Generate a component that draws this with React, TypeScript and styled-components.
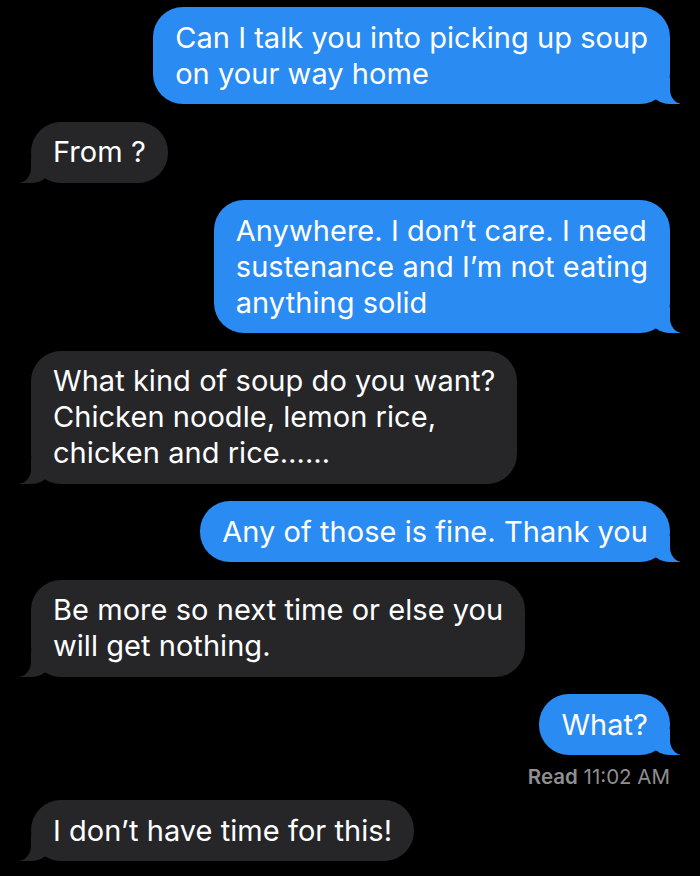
import React from "react";
import styled, { createGlobalStyle, css } from "styled-components";

const GlobalStyle = createGlobalStyle`
  html, body {
    margin: 0;
    padding: 0;
    background: #000;
  }
  body {
    font-family: "Inter", "Roboto", "Liberation Sans", sans-serif;
    -webkit-font-smoothing: antialiased;
  }
`;

const BLUE = "#2a8bf3";
const GRAY = "#262629";

const Thread = styled.div`
  width: 700px;
  min-height: 876px;
  box-sizing: border-box;
  padding: 7px 30px 0 31px;
  display: flex;
  flex-direction: column;
  gap: 17.5px;
  overflow: hidden;
`;

const Bubble = styled.div<{ $sent?: boolean }>`
  position: relative;
  z-index: 0;
  padding: 12.5px 22px;
  border-radius: 30px;
  font-size: 29px;
  line-height: 36px;
  letter-spacing: 0.05px;
  color: #fff;
  white-space: nowrap;
  align-self: ${(p) => (p.$sent ? "flex-end" : "flex-start")};
  background: ${(p) => (p.$sent ? BLUE : GRAY)};

  &::before,
  &::after {
    content: "";
    position: absolute;
    bottom: 0;
    z-index: -1;
  }

  ${(p) =>
    p.$sent
      ? css`
          &::before {
            right: -10px;
            width: 30px;
            height: 26px;
            background: ${BLUE};
            border-bottom-left-radius: 20px 16px;
          }
          &::after {
            right: -16px;
            width: 16px;
            height: 26px;
            background: #000;
            border-bottom-left-radius: 12px 15px;
          }
        `
      : css`
          &::before {
            left: -12px;
            width: 32px;
            height: 26px;
            background: ${GRAY};
            border-bottom-right-radius: 20px 16px;
          }
          &::after {
            left: -18px;
            width: 18px;
            height: 26px;
            background: #000;
            border-bottom-right-radius: 13px 15px;
          }
        `}
`;

const Receipt = styled.div`
  align-self: flex-end;
  margin: -8px 0 -6px;
  font-size: 20.5px;
  line-height: 24px;
  color: #8e8e93;

  b {
    font-weight: 600;
  }
`;

type Msg = { sent?: boolean; lines: string[] };

const messages: Msg[] = [
  { sent: true, lines: ["Can I talk you into picking up soup", "on your way home"] },
  { lines: ["From ?"] },
  {
    sent: true,
    lines: ["Anywhere. I don\u2019t care. I need", "sustenance and I\u2019m not eating", "anything solid"],
  },
  {
    lines: ["What kind of soup do you want?", "Chicken noodle, lemon rice,", "chicken and rice\u2026\u2026"],
  },
  { sent: true, lines: ["Any of those is fine. Thank you"] },
  { lines: ["Be more so next time or else you", "will get nothing."] },
  { sent: true, lines: ["What?"] },
];

export default function App() {
  return (
    <>
      <GlobalStyle />
      <Thread>
        {messages.map((m, i) => (
          <Bubble key={i} $sent={m.sent}>
            {m.lines.map((l, j) => (
              <React.Fragment key={j}>
                {j > 0 && <br />}
                {l}
              </React.Fragment>
            ))}
          </Bubble>
        ))}
        <Receipt>
          <b>Read</b> 11:02 AM
        </Receipt>
        <Bubble>I don{"\u2019"}t have time for this!</Bubble>
      </Thread>
    </>
  );
}
